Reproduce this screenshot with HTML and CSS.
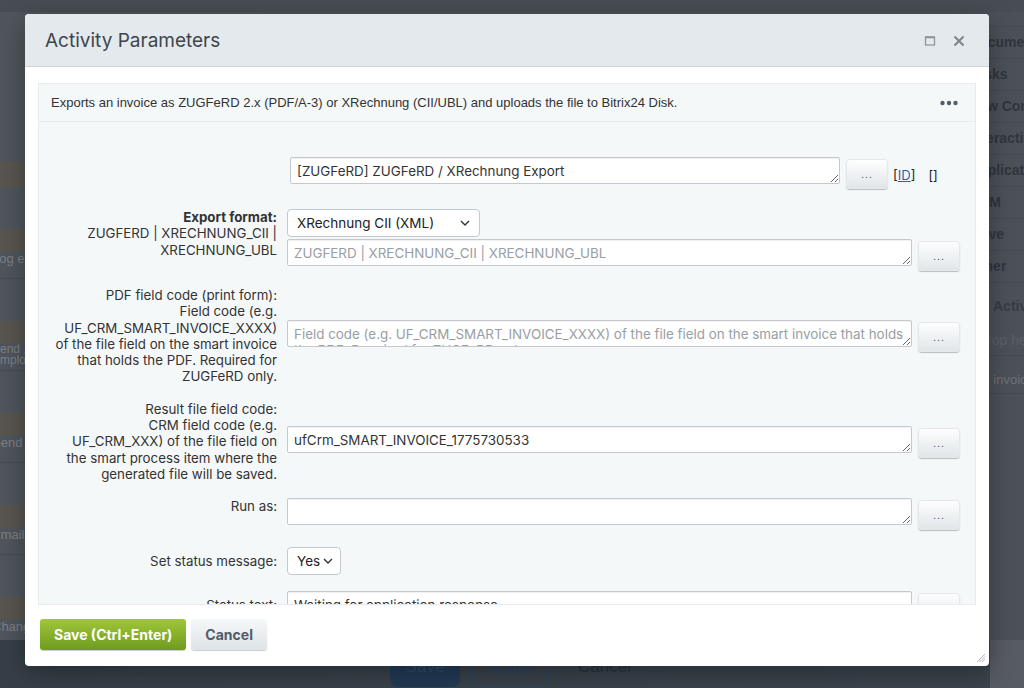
FILE: index.html
```html
<!DOCTYPE html>
<html lang="en">

<head>
    <meta charset="UTF-8">
    <title>Activity Parameters</title>
    <link rel="stylesheet" href="styles.css">
</head>

<body>
    <!-- Designer page behind the dialog -->
    <div class="page">
        <div class="topbar"></div>
        <div class="workspace">
            <div class="tool-list">
                <div class="tool-group tool-group-first">
                    <div class="tool-band tool-band-tall"></div>
                </div>
                <div class="tool-group">
                    <div class="tool-band"></div>
                    <div class="tool-item">Log entry</div>
                </div>
                <div class="tool-group">
                    <div class="tool-band"></div>
                    <div class="tool-item tool-item-double">Send ...<br>Employee</div>
                </div>
                <div class="tool-group">
                    <div class="tool-band"></div>
                    <div class="tool-item">Send</div>
                </div>
                <div class="tool-group">
                    <div class="tool-band"></div>
                    <div class="tool-item">Email</div>
                </div>
                <div class="tool-group">
                    <div class="tool-band"></div>
                    <div class="tool-item">Change</div>
                </div>
            </div>
            <div class="canvas"></div>
            <div class="side-list">
                <div class="side-row">Document</div>
                <div class="side-row">Tasks</div>
                <div class="side-row">New Con</div>
                <div class="side-row">Interactive</div>
                <div class="side-row">Applications</div>
                <div class="side-row">CRM</div>
                <div class="side-row">Drive</div>
                <div class="side-row">Other</div>
                <div class="side-head">Activities</div>
                <div class="side-row side-drop">Drop here</div>
                <div class="side-row side-item">Smart invoice</div>
                <div class="side-row side-empty"></div>
            </div>
        </div>
        <div class="bottom-bar">
            <div class="bottom-actions">
                <span class="bg-btn bg-btn-save">Save</span>
                <span class="bg-btn bg-btn-apply">Apply</span>
                <span class="bg-btn bg-btn-cancel">Cancel</span>
            </div>
            <div class="bottom-side"></div>
        </div>
    </div>

    <!-- Dialog -->
    <div class="popup">
        <div class="popup-head">
            <span class="popup-title">Activity Parameters</span>
            <div class="popup-icons">
                <svg width="12" height="12" viewBox="0 0 12 12">
                    <rect x="1.5" y="2" width="9" height="8" fill="none" stroke="#8a919a" stroke-width="1.2" />
                    <line x1="1" y1="2.3" x2="11" y2="2.3" stroke="#8a919a" stroke-width="1.8" />
                </svg>
                <svg width="12" height="12" viewBox="0 0 12 12">
                    <path d="M1.5 1.5 L10.5 10.5 M10.5 1.5 L1.5 10.5" stroke="#7c848d" stroke-width="2" fill="none" />
                </svg>
            </div>
        </div>

        <div class="popup-body">
            <div class="params">
                <div class="params-desc">
                    <span>Exports an invoice as ZUGFeRD 2.x (PDF/A-3) or XRechnung (CII/UBL) and uploads the file to Bitrix24 Disk.</span>
                    <svg width="18" height="6" viewBox="0 0 18 6">
                        <circle cx="2.5" cy="3" r="2.2" fill="#535c69" />
                        <circle cx="9" cy="3" r="2.2" fill="#535c69" />
                        <circle cx="15.5" cy="3" r="2.2" fill="#535c69" />
                    </svg>
                </div>

                <div class="params-form">
                    <div class="param-row">
                        <div class="param-label"></div>
                        <div class="param-control param-control-title">
                            <div class="field-line">
                                <textarea class="field field-title" spellcheck="false">[ZUGFeRD] ZUGFeRD / XRechnung Export</textarea>
                                <button class="pick-btn">...</button>
                                <span class="id-link">[<a href="#">ID</a>]</span>
                                <span class="id-empty">[]</span>
                            </div>
                        </div>
                    </div>

                    <div class="param-row">
                        <div class="param-label param-label-top"><b>Export format:</b><br>ZUGFERD | XRECHNUNG_CII |<br>XRECHNUNG_UBL</div>
                        <div class="param-control">
                            <div class="select-wrap select-format">
                                <select class="select">
                                    <option>XRechnung CII (XML)</option>
                                </select>
                                <svg class="select-arrow" width="10" height="6" viewBox="0 0 10 6">
                                    <path d="M1 1 L5 5 L9 1" stroke="#333" stroke-width="1.4" fill="none" />
                                </svg>
                            </div>
                            <div class="field-line field-line-stacked">
                                <textarea class="field" placeholder="ZUGFERD | XRECHNUNG_CII | XRECHNUNG_UBL"></textarea>
                                <button class="pick-btn">...</button>
                            </div>
                        </div>
                    </div>

                    <div class="param-row">
                        <div class="param-label">PDF field code (print form):<br>Field code (e.g.<br>UF_CRM_SMART_INVOICE_XXXX)<br>of the file field on the smart invoice<br>that holds the PDF. Required for<br>ZUGFeRD only.</div>
                        <div class="param-control">
                            <div class="field-line">
                                <textarea class="field" placeholder="Field code (e.g. UF_CRM_SMART_INVOICE_XXXX) of the file field on the smart invoice that holds the PDF. Required for ZUGFeRD only."></textarea>
                                <button class="pick-btn">...</button>
                            </div>
                        </div>
                    </div>

                    <div class="param-row">
                        <div class="param-label">Result file field code:<br>CRM field code (e.g.<br>UF_CRM_XXX) of the file field on<br>the smart process item where the<br>generated file will be saved.</div>
                        <div class="param-control">
                            <div class="field-line">
                                <textarea class="field">ufCrm_SMART_INVOICE_1775730533</textarea>
                                <button class="pick-btn">...</button>
                            </div>
                        </div>
                    </div>

                    <div class="param-row">
                        <div class="param-label param-label-top">Run as:</div>
                        <div class="param-control">
                            <div class="field-line">
                                <textarea class="field"></textarea>
                                <button class="pick-btn">...</button>
                            </div>
                        </div>
                    </div>

                    <div class="param-row param-row-status">
                        <div class="param-label">Set status message:</div>
                        <div class="param-control">
                            <div class="select-wrap select-yes">
                                <select class="select">
                                    <option>Yes</option>
                                </select>
                                <svg class="select-arrow" width="10" height="6" viewBox="0 0 10 6">
                                    <path d="M1 1 L5 5 L9 1" stroke="#333" stroke-width="1.4" fill="none" />
                                </svg>
                            </div>
                        </div>
                    </div>

                    <div class="param-row">
                        <div class="param-label param-label-top param-label-status">Status text:</div>
                        <div class="param-control">
                            <div class="field-line">
                                <textarea class="field">Waiting for application response</textarea>
                                <button class="pick-btn">...</button>
                            </div>
                        </div>
                    </div>
                </div>
            </div>
        </div>

        <div class="popup-foot">
            <button class="btn btn-save">Save (Ctrl+Enter)</button>
            <button class="btn btn-cancel">Cancel</button>
        </div>

        <svg class="popup-grip" width="11" height="11" viewBox="0 0 11 11">
            <path d="M10 2 L2 10 M10 4.5 L4.5 10 M10 7 L7 10" stroke="#b5b9bd" stroke-width="1" fill="none" />
        </svg>
    </div>
</body>

</html>
```

FILE: styles.css
```css
:root {
    --text: #333333;
    --field-border: #c3c9ce;
    --panel-bg: #f5f8f9;
    --panel-border: #e6ecee;
    --ui-font: Inter, "Liberation Sans", Arial, sans-serif;
    --plain-font: "Liberation Sans", Arial, sans-serif;
}

body {
    margin: 0;
    width: 1024px;
    height: 688px;
    overflow: hidden;
    position: relative;
    background: #4f545c;
    font-family: var(--ui-font);
    color: var(--text);
}

/* ---------- page behind the dialog ---------- */

.page {
    display: flex;
    flex-direction: column;
    height: 688px;
    font-family: var(--plain-font);
}

.topbar {
    height: 12px;
    flex-shrink: 0;
    background: #484d54;
}

.workspace {
    flex: 1;
    display: flex;
    min-height: 0;
}

.tool-list {
    width: 260px;
    flex-shrink: 0;
    padding-top: 150px;
    background: #50555d;
    overflow: hidden;
}

.tool-group {
    padding-bottom: 42px;
}

.tool-band {
    height: 22px;
    background: #58564f;
}

.tool-band-tall {
    height: 25px;
}

.tool-item {
    height: 28px;
    border-bottom: 1px solid #474c53;
    margin-left: -8px;
    font-size: 13px;
    line-height: 16px;
    box-sizing: border-box;
    color: #7c8086;
    white-space: nowrap;
}

.tool-item-double {
    font-size: 12px;
    line-height: 11px;
    padding-top: 1px;
}

.canvas {
    flex: 1;
}

.side-list {
    width: 70px;
    flex-shrink: 0;
    padding-top: 14px;
    background: #4c5159;
    overflow: hidden;
    white-space: nowrap;
}

.side-row {
    height: 31px;
    border-top: 1px solid #454a51;
    font-size: 14px;
    font-weight: bold;
    line-height: 31px;
    color: #30363d;
    text-indent: 15px;
}

.side-head {
    height: 44px;
    border-top: 1px solid #454a51;
    line-height: 46px;
    font-size: 14px;
    font-weight: bold;
    color: #363c43;
    text-indent: 39px;
}

.side-drop {
    height: 28px;
    border-top: none;
    line-height: 26px;
    font-weight: normal;
    color: #5a5f66;
    text-indent: 23px;
}

.side-item {
    height: 37px;
    line-height: 48px;
    font-size: 13px;
    font-weight: normal;
    color: #6c7177;
    text-indent: 1px;
}

.side-empty {
    height: 28px;
}

.bottom-bar {
    height: 48px;
    flex-shrink: 0;
    display: flex;
}

.bottom-actions {
    flex: 1;
    display: flex;
    align-items: flex-start;
    gap: 10px;
    padding: 8px 0 0 390px;
    background: linear-gradient(90deg, #363f48, #3b444c);
}

.bottom-side {
    width: 34px;
    background: #575b62;
}

.bg-btn {
    height: 39px;
    box-sizing: border-box;
    border-radius: 8px;
    font-size: 17px;
    line-height: 37px;
    text-align: center;
}

.bg-btn-save {
    width: 70px;
    background: #223a55;
    color: #31496a;
}

.bg-btn-apply {
    width: 79px;
    border: 1px solid #2d4460;
    color: #2c4461;
}

.bg-btn-cancel {
    padding: 0 19px;
    color: #27313b;
}

/* ---------- dialog ---------- */

.popup {
    position: absolute;
    left: 25px;
    top: 14px;
    width: 964px;
    height: 652px;
    display: flex;
    flex-direction: column;
    background: #ffffff;
    border-radius: 4px;
    box-shadow: 0 6px 24px rgba(0, 0, 0, 0.35);
    overflow: hidden;
}

.popup-head {
    height: 52px;
    flex-shrink: 0;
    display: flex;
    align-items: center;
    justify-content: space-between;
    padding: 0 24px 0 20px;
    background: #e3e9ec;
    border-bottom: 1px solid #d6d1d3;
}

.popup-title {
    font-size: 19px;
    color: #3f454d;
    padding-top: 1px;
}

.popup-icons {
    display: flex;
    gap: 17px;
    padding-top: 2px;
}

.popup-body {
    flex: 1;
    min-height: 0;
    padding: 16px 13px 0;
}

.params {
    height: 522px;
    box-sizing: border-box;
    background: var(--panel-bg);
    border: 1px solid var(--panel-border);
    overflow: hidden;
}

.params-desc {
    height: 37px;
    display: flex;
    align-items: center;
    justify-content: space-between;
    padding: 0 17px 0 12px;
    border-bottom: 1px solid var(--panel-border);
    font-family: var(--plain-font);
    font-size: 13px;
}

.params-form {
    padding-top: 27px;
}

.param-row {
    display: flex;
    align-items: center;
    padding: 8px 0;
}

.param-row-status {
    padding-top: 9px;
    padding-bottom: 8px;
}

.param-label {
    width: 240px;
    flex-shrink: 0;
    box-sizing: border-box;
    padding-right: 2px;
    text-align: right;
    font-size: 13.3px;
    line-height: 16.3px;
    white-space: nowrap;
}

.param-label-top {
    align-self: flex-start;
}

.param-label-status {
    padding-top: 6px;
}

.param-control {
    margin-left: 8px;
    display: flex;
    flex-direction: column;
}

.param-control-title {
    margin-left: 11px;
}

.field-line {
    display: flex;
    align-items: flex-start;
    gap: 6px;
}

.field-line-stacked {
    margin-top: 2px;
}

.field {
    width: 625px;
    height: 27px;
    box-sizing: border-box;
    margin: 0;
    padding: 5px 6px;
    border: 1px solid var(--field-border);
    border-radius: 2px;
    box-shadow: inset 0 1px 1px rgba(0, 0, 0, 0.06);
    background: #ffffff;
    font-family: var(--ui-font);
    font-size: 13.4px;
    line-height: 16px;
    color: var(--text);
    overflow: hidden;
    resize: vertical;
}

.field::placeholder {
    color: #989ea4;
}

.field-title {
    width: 550px;
}

.pick-btn {
    width: 42px;
    height: 30px;
    margin-top: 2px;
    flex-shrink: 0;
    padding: 0;
    border: none;
    border-radius: 4px;
    background: linear-gradient(#ffffff, #dfe5e8);
    box-shadow: 0 1px 1px rgba(0, 0, 0, 0.25), inset 0 0 0 1px #e3e8ea;
    font-family: var(--plain-font);
    font-size: 11px;
    letter-spacing: 1px;
    color: #535c69;
}

.id-link,
.id-empty {
    font-size: 13px;
    line-height: 36px;
    color: #222;
}

.id-link {
    margin-left: -1px;
}

.id-link a {
    color: #2067b0;
}

.id-empty {
    margin-left: 7px;
}

.select-wrap {
    position: relative;
    height: 28px;
}

.select {
    width: 100%;
    height: 28px;
    margin: 0;
    padding: 0 0 0 9px;
    border: 1px solid var(--field-border);
    border-radius: 4px;
    background: #ffffff;
    appearance: none;
    font-family: var(--ui-font);
    font-size: 13.5px;
    color: #222;
}

.select-arrow {
    position: absolute;
    right: 10px;
    top: 11px;
    pointer-events: none;
}

.select-format {
    width: 193px;
}

.select-yes {
    width: 54px;
}

.select-yes .select-arrow {
    right: 8px;
}

.popup-foot {
    flex-shrink: 0;
    display: flex;
    gap: 5px;
    padding: 14px 15px 16px;
}

.btn {
    height: 31px;
    padding: 0 14px;
    border: none;
    border-radius: 3px;
    font-family: var(--ui-font);
    font-size: 14px;
    font-weight: bold;
}

.btn-save {
    background: linear-gradient(#a1c63a, #6f9b1f);
    color: #ffffff;
    box-shadow: 0 1px 1px rgba(0, 0, 0, 0.2);
}

.btn-cancel {
    background: linear-gradient(#f6f8f9, #dde3e6);
    color: #535c69;
    box-shadow: 0 1px 1px rgba(0, 0, 0, 0.2);
}

.popup-grip {
    position: absolute;
    right: 3px;
    bottom: 3px;
}
```
